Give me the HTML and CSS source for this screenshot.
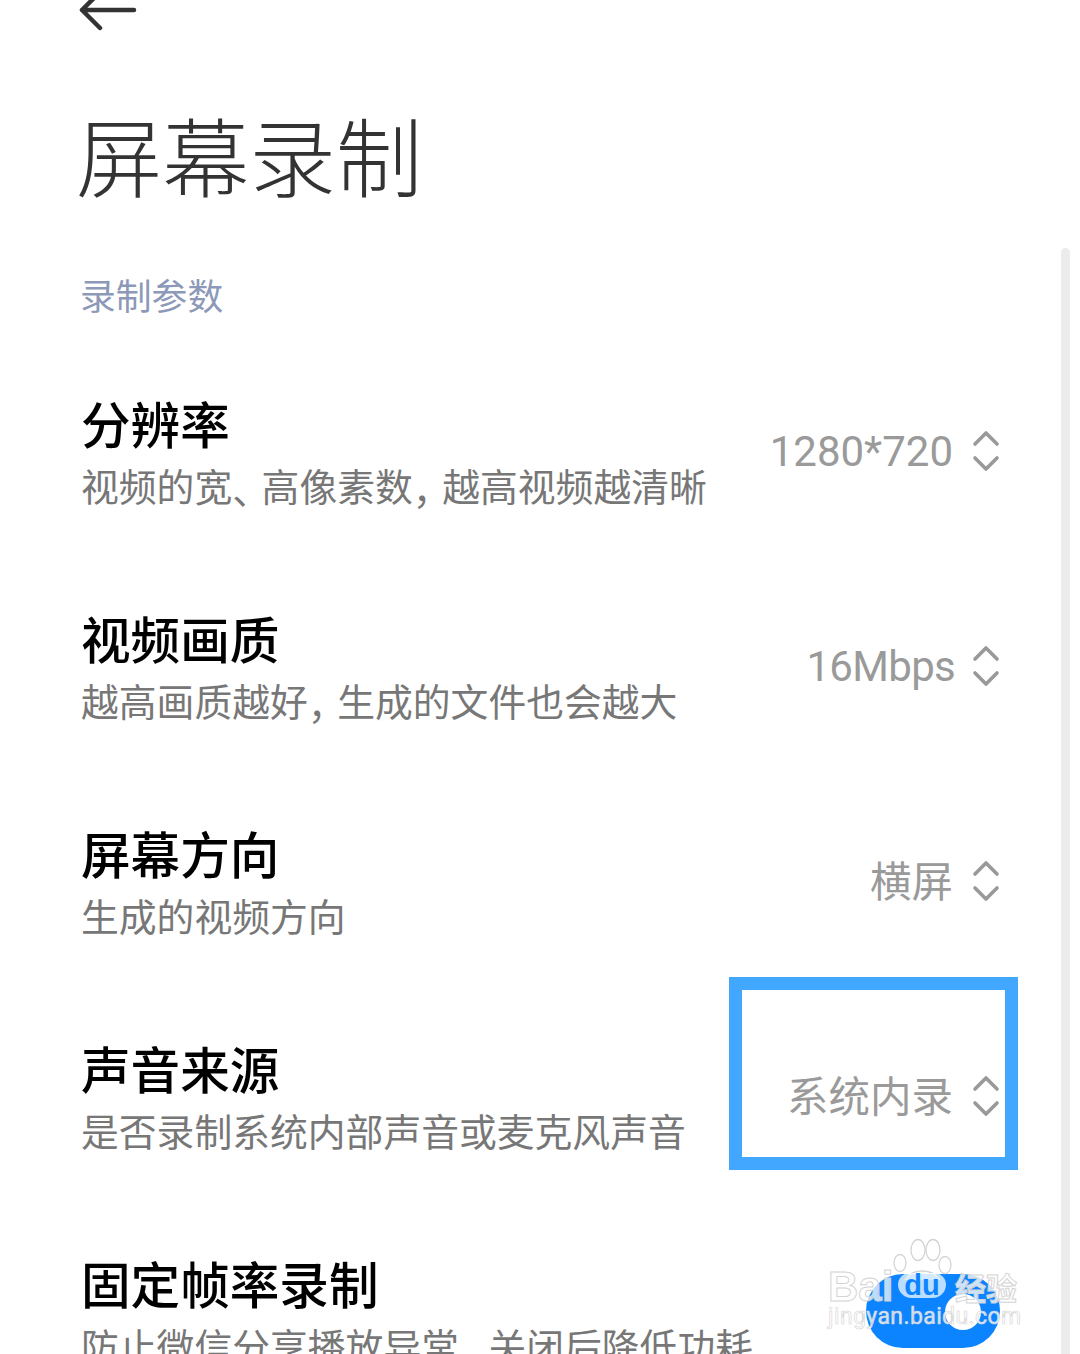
FILE: index.html
```html
<!DOCTYPE html>
<html lang="zh-CN">
<head>
<meta charset="utf-8">
<title>屏幕录制</title>
<link rel="stylesheet" href="styles.css">
</head>
<body>
<div class="screen">
  <header class="top">
    <svg class="back" width="60" height="40" viewBox="0 0 60 40"><path d="M2 10H54M20 -8L2 10L20 28" fill="none" stroke="#333" stroke-width="4.5" stroke-linecap="round" stroke-linejoin="round"/></svg>
    <h1 class="title">屏幕录制</h1>
    <div class="section">录制参数</div>
  </header>
  <main class="list">
    <section class="row">
      <div class="text"><div class="name">分辨率</div><div class="desc">视频的宽<span class="punct">、</span>高像素数<span class="punct">，</span>越高视频越清晰</div></div>
      <div class="value"><span>1280*720</span><svg class="updown" width="28" height="42" viewBox="0 0 28 42"><path d="M3 14L14 3L25 14M3 28L14 39L25 28" fill="none" stroke="#999" stroke-width="3.6" stroke-linecap="round" stroke-linejoin="round"/></svg></div>
    </section>
    <section class="row">
      <div class="text"><div class="name">视频画质</div><div class="desc">越高画质越好<span class="punct">，</span>生成的文件也会越大</div></div>
      <div class="value"><span class="tight">16Mbps</span><svg class="updown" width="28" height="42" viewBox="0 0 28 42"><path d="M3 14L14 3L25 14M3 28L14 39L25 28" fill="none" stroke="#999" stroke-width="3.6" stroke-linecap="round" stroke-linejoin="round"/></svg></div>
    </section>
    <section class="row">
      <div class="text"><div class="name">屏幕方向</div><div class="desc">生成的视频方向</div></div>
      <div class="value"><span class="cjk">横屏</span><svg class="updown" width="28" height="42" viewBox="0 0 28 42"><path d="M3 14L14 3L25 14M3 28L14 39L25 28" fill="none" stroke="#999" stroke-width="3.6" stroke-linecap="round" stroke-linejoin="round"/></svg></div>
    </section>
    <section class="row">
      <div class="text"><div class="name">声音来源</div><div class="desc">是否录制系统内部声音或麦克风声音</div></div>
      <div class="value"><span class="cjk">系统内录</span><svg class="updown" width="28" height="42" viewBox="0 0 28 42"><path d="M3 14L14 3L25 14M3 28L14 39L25 28" fill="none" stroke="#999" stroke-width="3.6" stroke-linecap="round" stroke-linejoin="round"/></svg></div>
    </section>
    <section class="row">
      <div class="text"><div class="name">固定帧率录制</div><div class="desc">防止微信分享播放异常<span class="punct">，</span>关闭后降低功耗</div></div>
      <div class="toggle"><span class="knob"></span></div>
    </section>
  </main>
  <div class="scrollbar"></div>
  <div class="highlight"></div>
  <div class="watermark">
    <svg class="paw" width="66" height="50" viewBox="0 0 66 50"><g fill="#fff" fill-opacity=".35" stroke="#d4d4d4" stroke-width="1.3"><ellipse cx="10" cy="27" rx="6" ry="8.5"/><ellipse cx="28" cy="14" rx="7" ry="10.5"/><ellipse cx="43" cy="14" rx="7" ry="10.5"/><ellipse cx="55" cy="29" rx="6" ry="8.5"/><path d="M15 44C22 32 42 32 50 44"/></g></svg>
    <div class="wm-main"><span class="wm-latin">Bai</span><span class="wm-du">du</span><span class="wm-cn">经验</span></div>
    <div class="wm-url">jingyan.baidu.com</div>
  </div>
</div>
</body>
</html>
```
FILE: styles.css
```css
* { box-sizing: border-box; }
html, body { margin: 0; padding: 0; background: #fff; }
body { font-family: "Noto Sans CJK SC", "Noto Sans", sans-serif; }
.screen { position: relative; width: 1080px; height: 1354px; overflow: hidden; background: #fff; }
.top { height: 344px; padding-left: 80px; display: flex; flex-direction: column; align-items: flex-start; }
.back { display: block; overflow: visible; flex: none; }
.title { margin: 54px 0 0 -4px; font-size: 86.6px; line-height: 120px; font-weight: 300; color: #333; }
.section { margin: 55px 0 0 0; font-size: 35.8px; line-height: 50px; color: #8d99b8; }
.list { display: flex; flex-direction: column; padding: 0 80px 0 81px; }
.row { height: 215px; flex: none; display: flex; align-items: center; justify-content: space-between; }
.text { padding-top: 3px; }
.name { font-size: 49.6px; line-height: 62px; font-weight: 500; color: #000; }
.desc { font-size: 37.8px; line-height: 63px; color: #777; white-space: nowrap; }
.punct { letter-spacing: -8.4px; position: relative; top: 3px; }
.value { display: flex; align-items: center; gap: 19px; font-family: Roboto, "Noto Sans CJK SC", sans-serif; font-size: 42px; font-weight: 400; color: #9a9a9a; }
.tight { letter-spacing: -.7px; margin-right: -2px; }
.cjk { font-family: "Noto Sans CJK SC", sans-serif; font-weight: 400; font-size: 41.5px; position: relative; top: -3px; }
.updown { display: block; flex: none; position: relative; top: -1px; }
.toggle { position: relative; width: 134px; height: 74px; border-radius: 37px; background: #0d84ff; margin-left: auto; top: -1px; }
.knob { position: absolute; left: 79px; top: 20px; width: 36px; height: 36px; border-radius: 50%; background: #fff; }
.scrollbar { position: absolute; left: 1061px; top: 248px; bottom: 0; width: 9px; background: #ececec; border-radius: 5px 5px 0 0; }
.highlight { position: absolute; left: 729px; top: 977px; width: 289px; height: 193px; border: 13px solid #42a7ff; }
.watermark { position: absolute; left: 828px; top: 1238px; width: 196px; height: 100px; }
.paw { position: absolute; left: 62px; top: -2px; }
.wm-main { position: absolute; left: 0; top: 34px; height: 30px; display: flex; align-items: center; white-space: nowrap; }
.wm-latin { width: 70px; font-family: "Liberation Sans", sans-serif; font-size: 42px; font-weight: 700; line-height: 30px; color: rgba(255,255,255,.72); -webkit-text-stroke: 1px #d4d4d4; }
.wm-du { width: 48px; height: 25px; margin-top: -3px; border-radius: 12px 12px 14px 14px; background: rgba(255,255,255,.72); font-family: "Liberation Sans", sans-serif; font-size: 29px; font-weight: 700; line-height: 24px; text-align: center; color: #0d84ff; }
.wm-cn { margin-left: 9px; font-size: 31px; font-weight: 700; line-height: 30px; color: rgba(255,255,255,.78); -webkit-text-stroke: 1px #d4d4d4; }
.wm-url { position: absolute; left: 0; top: 65px; font-family: Roboto, sans-serif; font-size: 23px; line-height: 28px; letter-spacing: .4px; color: rgba(255,255,255,.82); -webkit-text-stroke: .6px #d4d4d4; white-space: nowrap; }
```
